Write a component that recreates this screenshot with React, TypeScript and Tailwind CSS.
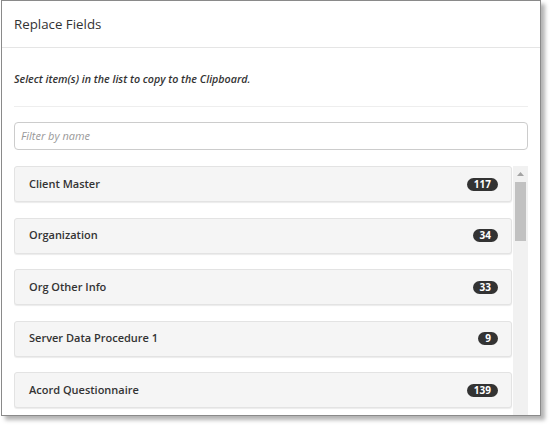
import React from "react";

const items = [
  { name: "Client Master", count: 117 },
  { name: "Organization", count: 34 },
  { name: "Org Other Info", count: 33 },
  { name: "Server Data Procedure 1", count: 9 },
  { name: "Acord Questionnaire", count: 139 },
];

export default function App() {
  return (
    <div
      className="w-[550px] h-[426px] bg-white overflow-hidden"
      style={{ fontFamily: '"Open Sans", "Liberation Sans", sans-serif' }}
    >
      <div className="ml-[1px] w-[540px] h-[416px] border border-[#8a8a8a] bg-white shadow-[4px_4px_4px_rgba(0,0,0,0.3)] flex flex-col overflow-hidden">
        <div className="h-[47px] border-b border-[#e5e5e5] flex items-center px-[12px] shrink-0">
          <span className="text-[13.3px] text-[#333] pt-[2px]">Replace Fields</span>
        </div>
        <div className="flex-1 flex flex-col px-[12px] min-h-0">
          <div className="h-[59px] flex items-center border-b border-[#eeeeee] shrink-0 pt-[5px]">
            <span className="text-[10.7px] italic font-semibold text-[#333]">
              Select item(s) in the list to copy to the Clipboard.
            </span>
          </div>
          <div className="pt-[15px] shrink-0">
            <div className="h-[28px] border border-[#cccccc] rounded-[4px] flex items-center px-[6px]">
              <span className="text-[11px] italic text-[#999]">Filter by name</span>
            </div>
          </div>
          <div className="flex-1 min-h-0 flex gap-[1px] pt-[16px] overflow-hidden">
            <div className="flex-1 flex flex-col gap-[15.5px]">
              {items.map((it) => (
                <div
                  key={it.name}
                  className="h-[36px] shrink-0 rounded-[3px] border border-[#e3e3e3] bg-[#f5f5f5] shadow-[0_1px_1px_rgba(0,0,0,0.08)] flex items-center justify-between pl-[14px] pr-[13px]"
                >
                  <span className="text-[11px] font-semibold text-[#333]">{it.name}</span>
                  <span className="h-[13px] rounded-full bg-[#333] text-white text-[10px] font-bold leading-[13px] px-[7px] flex items-center">
                    {it.count}
                  </span>
                </div>
              ))}
            </div>
            <div className="w-[15px] bg-[#f1f1f1] flex flex-col items-center shrink-0">
              <div className="h-[16px] flex items-center justify-center">
                <svg width="7" height="4" viewBox="0 0 7 4">
                  <path d="M3.5 0 L7 4 L0 4 Z" fill="#a3a3a3" />
                </svg>
              </div>
              <div className="w-[11px] h-[59px] bg-[#c1c1c1]" />
            </div>
          </div>
        </div>
      </div>
    </div>
  );
}
